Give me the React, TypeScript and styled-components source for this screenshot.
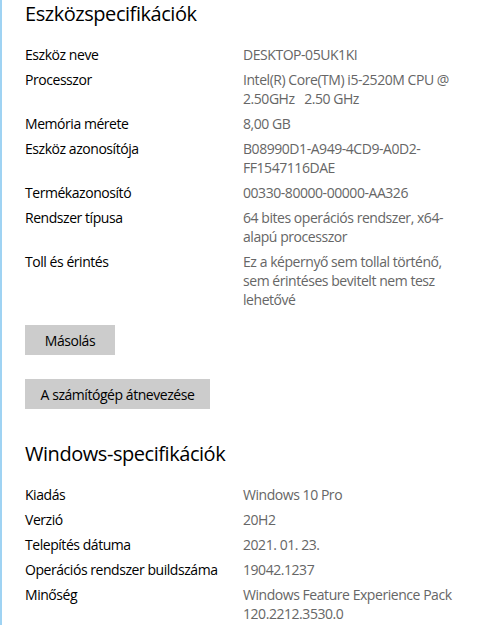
import React from "react";
import styled, { createGlobalStyle } from "styled-components";

const Global = createGlobalStyle`
  html, body { margin: 0; padding: 0; background: #ffffff; }
  body { font-family: "Open Sans", "Noto Sans", sans-serif; }
`;

const Page = styled.div`
  box-sizing: border-box;
  width: 494px;
  height: 625px;
  overflow: hidden;
  border-left: 2px solid #9fd3f3;
  padding-left: 23px;
  background: #ffffff;
  display: flex;
  flex-direction: column;
`;

const Heading = styled.h2<{ $top: number }>`
  margin: ${(p) => p.$top}px 0 0 0;
  font-size: 20px;
  line-height: 28px;
  font-weight: 400;
  color: #000000;
  letter-spacing: -0.45px;
`;

const SpecList = styled.dl`
  margin: 17px 0 0 0;
  display: flex;
  flex-direction: column;
  gap: 6px;
`;

const SpecRow = styled.div`
  display: grid;
  grid-template-columns: 218px 1fr;
  font-size: 14px;
  line-height: 19px;
  letter-spacing: -0.45px;
`;

const Label = styled.dt`
  margin: 0;
  color: #000000;
`;

const Value = styled.dd`
  margin: 0;
  color: #666666;
  white-space: pre-wrap;
`;

const ButtonGroup = styled.div`
  margin-top: 16px;
  display: flex;
  flex-direction: column;
  align-items: flex-start;
  gap: 24px;
`;

const Button = styled.button<{ $w: number }>`
  width: ${(p) => p.$w}px;
  height: 30px;
  border: none;
  background: #cccccc;
  color: #000000;
  font-family: inherit;
  font-size: 14px;
  letter-spacing: -0.45px;
  padding: 0;
  cursor: pointer;
`;

const device: [string, string][] = [
  ["Eszköz neve", "DESKTOP-05UK1KI"],
  ["Processzor", "Intel(R) Core(TM) i5-2520M CPU @\n2.50GHz   2.50 GHz"],
  ["Memória mérete", "8,00 GB"],
  ["Eszköz azonosítója", "B08990D1-A949-4CD9-A0D2-\nFF1547116DAE"],
  ["Termékazonosító", "00330-80000-00000-AA326"],
  ["Rendszer típusa", "64 bites operációs rendszer, x64-\nalapú processzor"],
  ["Toll és érintés", "Ez a képernyő sem tollal történő,\nsem érintéses bevitelt nem tesz\nlehetővé"],
];

const windows: [string, string][] = [
  ["Kiadás", "Windows 10 Pro"],
  ["Verzió", "20H2"],
  ["Telepítés dátuma", "2021. 01. 23."],
  ["Operációs rendszer buildszáma", "19042.1237"],
  ["Minőség", "Windows Feature Experience Pack\n120.2212.3530.0"],
];

const Specs = ({ rows }: { rows: [string, string][] }) => (
  <SpecList>
    {rows.map(([k, v]) => (
      <SpecRow key={k}>
        <Label>{k}</Label>
        <Value>{v}</Value>
      </SpecRow>
    ))}
  </SpecList>
);

export default function App() {
  return (
    <>
      <Global />
      <Page>
        <Heading $top={0}>Eszközspecifikációk</Heading>
        <Specs rows={device} />
        <ButtonGroup>
          <Button $w={90}>Másolás</Button>
          <Button $w={185}>A számítógép átnevezése</Button>
        </ButtonGroup>
        <Heading $top={31}>Windows-specifikációk</Heading>
        <Specs rows={windows} />
      </Page>
    </>
  );
}
